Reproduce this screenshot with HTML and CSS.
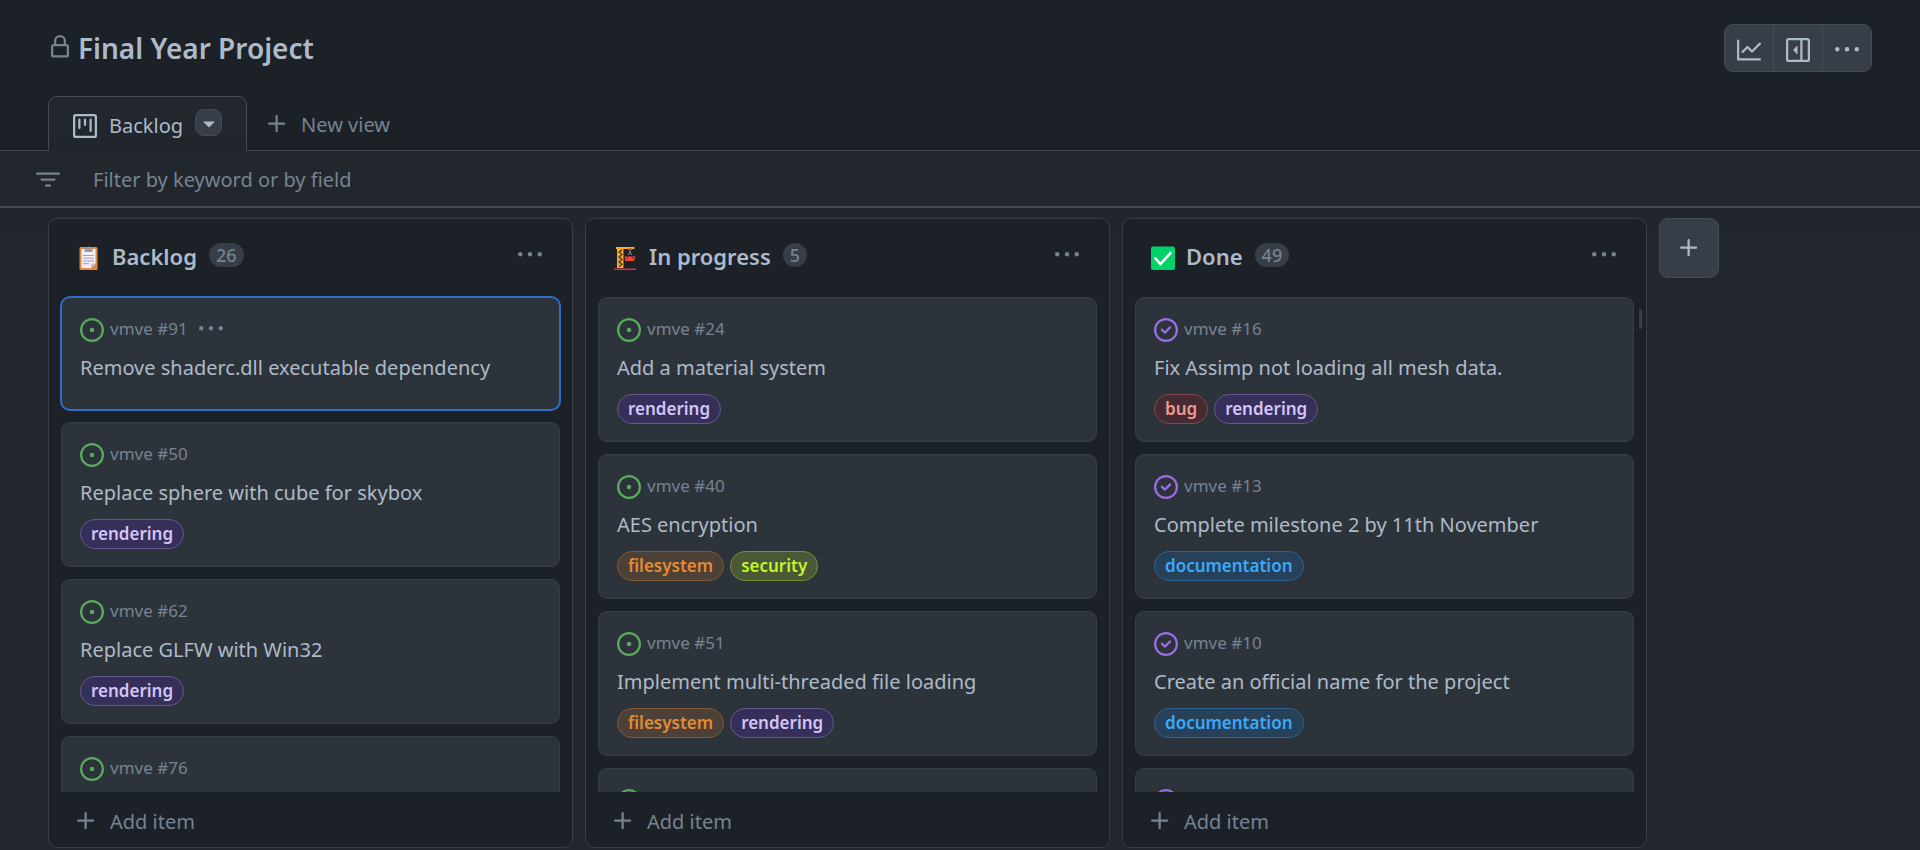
FILE: index.html
```html
<!DOCTYPE html>
<html lang="en">
<head>
<meta charset="utf-8">
<title>Final Year Project</title>
<link rel="stylesheet" href="styles.css">
</head>
<body>
<svg class="sprite" aria-hidden="true">
  <symbol id="i-dots" viewBox="0 0 16 16"><path d="M8 9a1.5 1.5 0 1 0 0-3 1.5 1.5 0 0 0 0 3ZM1.5 9a1.5 1.5 0 1 0 0-3 1.5 1.5 0 0 0 0 3Zm13 0a1.5 1.5 0 1 0 0-3 1.5 1.5 0 0 0 0 3Z"/></symbol>
  <symbol id="i-plus" viewBox="0 0 16 16"><path d="M7.75 2a.75.75 0 0 1 .75.75V7h4.25a.75.75 0 0 1 0 1.5H8.5v4.25a.75.75 0 0 1-1.5 0V8.500H2.750a.75.75 0 0 1 0-1.5H7V2.750A.75.75 0 0 1 7.750 2Z"/></symbol>
  <symbol id="i-open" viewBox="0 0 16 16"><path d="M8 9.500a1.500 1.500 0 1 0 0-3 1.500 1.500 0 0 0 0 3Z"/><path d="M8 0a8 8 0 1 1 0 16A8 8 0 0 1 8 0ZM1.500 8a6.500 6.500 0 1 0 13 0 6.500 6.500 0 0 0-13 0Z"/></symbol>
  <symbol id="i-closed" viewBox="0 0 16 16"><path d="M11.28 6.78a.75.75 0 0 0-1.06-1.06L7.25 8.69 5.78 7.22a.75.75 0 0 0-1.06 1.06l2 2a.75.75 0 0 0 1.06 0l3.5-3.5Z"/><path d="M16 8A8 8 0 1 1 0 8a8 8 0 0 1 16 0Zm-1.5 0a6.5 6.5 0 1 0-13 0 6.5 6.5 0 0 0 13 0Z"/></symbol>
</svg>

<header class="header">
  <h1 class="title">
    <svg class="icon title-lock" viewBox="0 0 16 16"><path d="M4 4a4 4 0 0 1 8 0v2h.25c.966 0 1.75.784 1.75 1.75v5.5A1.75 1.75 0 0 1 12.25 15h-8.5A1.75 1.75 0 0 1 2 13.25v-5.5C2 6.784 2.784 6 3.75 6H4Zm8.25 3.5h-8.5a.25.25 0 0 0-.25.25v5.5c0 .138.112.25.25.25h8.5a.25.25 0 0 0 .25-.25v-5.5a.25.25 0 0 0-.25-.25ZM10.5 6V4a2.5 2.5 0 1 0-5 0v2Z"/></svg>
    Final Year Project
  </h1>
  <div class="actions">
    <button class="action" aria-label="Insights"><svg class="icon" viewBox="0 0 16 16"><path d="M1.5 1.75V13.5h13.75a.75.75 0 0 1 0 1.5H.75a.75.75 0 0 1-.75-.75V1.75a.75.75 0 0 1 1.5 0Zm14.28 2.53-5.25 5.25a.75.75 0 0 1-1.06 0L7 7.06 4.28 9.78a.75.75 0 0 1-1.06-1.06l3.25-3.25a.75.75 0 0 1 1.06 0L10 7.94l4.72-4.72a.75.75 0 0 1 1.06 1.06Z"/></svg></button>
    <button class="action" aria-label="Open details"><svg class="icon" viewBox="0 0 16 16"><path d="M7.2 10.6 5 8.4a.55.55 0 0 1 0-.8l2.2-2.2c.3-.3.5-.1.5.2v4.8c0 .4-.2.5-.5.2Z"/><path d="M1.75 0h12.5C15.216 0 16 .784 16 1.75v12.5A1.75 1.75 0 0 1 14.25 16H1.75A1.75 1.75 0 0 1 0 14.25V1.75C0 .784.784 0 1.75 0ZM1.5 1.75v12.5c0 .138.112.25.25.25H9.5v-13H1.75a.25.25 0 0 0-.25.25ZM11 14.5h3.25a.25.25 0 0 0 .25-.25V1.75a.25.25 0 0 0-.25-.25H11Z"/></svg></button>
    <button class="action" aria-label="More options"><svg class="icon"><use href="#i-dots"/></svg></button>
  </div>
</header>

<nav class="tabs">
  <div class="tab">
    <a class="tab-link" href="#"><svg class="icon" viewBox="0 0 16 16"><path d="M1.75 0h12.5C15.216 0 16 .784 16 1.75v12.5A1.75 1.75 0 0 1 14.25 16H1.75A1.75 1.75 0 0 1 0 14.25V1.75C0 .784.784 0 1.75 0ZM1.5 1.75v12.5c0 .138.112.25.25.25h12.5a.25.25 0 0 0 .25-.25V1.75a.25.25 0 0 0-.25-.25H1.75a.25.25 0 0 0-.25.25ZM11.75 3a.75.75 0 0 1 .75.75v7.5a.75.75 0 0 1-1.5 0v-7.5a.75.75 0 0 1 .75-.75Zm-8.25.75a.75.75 0 0 1 1.5 0v5.5a.75.75 0 0 1-1.5 0ZM8 3a.75.75 0 0 1 .75.75v3.5a.75.75 0 0 1-1.5 0v-3.5A.75.75 0 0 1 8 3Z"/></svg>Backlog</a>
    <button class="tab-menu" aria-label="View options"><svg class="icon" viewBox="0 0 16 16"><path d="m4.427 7.427 3.396 3.396a.25.25 0 0 0 .354 0l3.396-3.396A.25.25 0 0 0 11.396 7H4.604a.25.25 0 0 0-.177.427Z"/></svg></button>
  </div>
  <button class="new-view"><svg class="icon"><use href="#i-plus"/></svg><span class="button-text">New view</span></button>
</nav>

<div class="filter">
  <svg class="icon" viewBox="0 0 16 16"><path d="M.75 3h14.5a.75.75 0 0 1 0 1.5H.75a.75.75 0 0 1 0-1.5ZM3 7.75A.75.75 0 0 1 3.75 7h8.5a.75.75 0 0 1 0 1.5h-8.5A.75.75 0 0 1 3 7.75Zm3 4a.75.75 0 0 1 .75-.75h2.5a.75.75 0 0 1 0 1.5h-2.5a.75.75 0 0 1-.75-.75Z"/></svg>
  <input class="filter-input" type="text" placeholder="Filter by keyword or by field" aria-label="Filter by keyword or by field">
</div>

<main class="board">
  <section class="column">
    <div class="column-head">
      <svg class="emoji" viewBox="0 0 24 24"><rect x="2.5" y="1" width="18" height="23" rx="1.5" fill="#e0893f"/><path d="M4.5 3h14v14.500L14 22H4.500Z" fill="#f3eef8"/><path d="M18.500 17.500 14 22v-4.500Z" fill="#c9c0d4"/><path d="M7.500 2H10a1.500 1.500 0 0 1 3 0h2.500v4h-8Z" fill="#9b9b9b"/><path d="M6 9.500h11M6 12.200h11M6 15h11M6 17.700h6" stroke="#a59fae" stroke-width="1"/></svg>
      <h2 class="column-title">Backlog</h2><span class="count">26</span>
      <button class="more" aria-label="Column options"><svg class="icon"><use href="#i-dots"/></svg></button>
    </div>
    <div class="cards">
      <article class="card selected">
        <div class="meta"><svg class="icon open"><use href="#i-open"/></svg><span class="ref">vmve #91</span><button class="card-more" aria-label="Card options"><svg class="icon"><use href="#i-dots"/></svg></button></div>
        <a class="card-title" href="#">Remove shaderc.dll executable dependency</a>
      </article>
      <article class="card">
        <div class="meta"><svg class="icon open"><use href="#i-open"/></svg><span class="ref">vmve #50</span></div>
        <a class="card-title" href="#">Replace sphere with cube for skybox</a>
        <div class="labels"><span class="label rendering">rendering</span></div>
      </article>
      <article class="card">
        <div class="meta"><svg class="icon open"><use href="#i-open"/></svg><span class="ref">vmve #62</span></div>
        <a class="card-title" href="#">Replace GLFW with Win32</a>
        <div class="labels"><span class="label rendering">rendering</span></div>
      </article>
      <article class="card">
        <div class="meta"><svg class="icon open"><use href="#i-open"/></svg><span class="ref">vmve #76</span></div>
      </article>
    </div>
    <button class="add-item"><svg class="icon"><use href="#i-plus"/></svg><span class="button-text">Add item</span></button>
  </section>

  <section class="column">
    <div class="column-head">
      <svg class="emoji" viewBox="0 0 24 24"><path d="M2 1h18.500v2H2Z" fill="#ffb02e"/><path d="M3 2h6.500v20H3Z" fill="#f9a72b"/><path d="m8 4-3 2 3 2.500L5 11l3 2.500L5 16l3 2.500-3 2" fill="none" stroke="#3b2d20" stroke-width="1.200"/><path d="M16 3v4M16 6l-1.800 3M16 6l1.800 3" stroke="#9b9b9b" stroke-width="0.900"/><path d="M14 2.500h4V4h-4Z" fill="#e8332f"/><path d="M0 22.500h22V24H0Z" fill="#e0302f"/><path d="M10.500 10.500h11L20 15h-8.500Z" fill="#f8432f"/><path d="M12.500 11.500h1.500l-1 2ZM18 11.500h2l-1 2Z" fill="#5c1f1c"/></svg>
      <h2 class="column-title">In progress</h2><span class="count">5</span>
      <button class="more" aria-label="Column options"><svg class="icon"><use href="#i-dots"/></svg></button>
    </div>
    <div class="cards">
      <article class="card">
        <div class="meta"><svg class="icon open"><use href="#i-open"/></svg><span class="ref">vmve #24</span></div>
        <a class="card-title" href="#">Add a material system</a>
        <div class="labels"><span class="label rendering">rendering</span></div>
      </article>
      <article class="card">
        <div class="meta"><svg class="icon open"><use href="#i-open"/></svg><span class="ref">vmve #40</span></div>
        <a class="card-title" href="#">AES encryption</a>
        <div class="labels"><span class="label filesystem">filesystem</span><span class="label security">security</span></div>
      </article>
      <article class="card">
        <div class="meta"><svg class="icon open"><use href="#i-open"/></svg><span class="ref">vmve #51</span></div>
        <a class="card-title" href="#">Implement multi-threaded file loading</a>
        <div class="labels"><span class="label filesystem">filesystem</span><span class="label rendering">rendering</span></div>
      </article>
      <article class="card">
        <div class="meta"><svg class="icon open"><use href="#i-open"/></svg></div>
      </article>
    </div>
    <button class="add-item"><svg class="icon"><use href="#i-plus"/></svg><span class="button-text">Add item</span></button>
  </section>

  <section class="column">
    <div class="column-head">
      <svg class="emoji" viewBox="0 0 24 24"><rect y="0.5" width="24" height="23.5" rx="2" fill="#00d26a"/><path d="m4.500 12.500 5 5.500L19.500 7" fill="none" stroke="#fff" stroke-width="2.600" stroke-linecap="round"/></svg>
      <h2 class="column-title">Done</h2><span class="count">49</span>
      <button class="more" aria-label="Column options"><svg class="icon"><use href="#i-dots"/></svg></button>
    </div>
    <div class="cards">
      <span class="scroll-thumb"></span>
      <article class="card">
        <div class="meta"><svg class="icon closed"><use href="#i-closed"/></svg><span class="ref">vmve #16</span></div>
        <a class="card-title" href="#">Fix Assimp not loading all mesh data.</a>
        <div class="labels"><span class="label bug">bug</span><span class="label rendering">rendering</span></div>
      </article>
      <article class="card">
        <div class="meta"><svg class="icon closed"><use href="#i-closed"/></svg><span class="ref">vmve #13</span></div>
        <a class="card-title" href="#">Complete milestone 2 by 11th November</a>
        <div class="labels"><span class="label documentation">documentation</span></div>
      </article>
      <article class="card">
        <div class="meta"><svg class="icon closed"><use href="#i-closed"/></svg><span class="ref">vmve #10</span></div>
        <a class="card-title" href="#">Create an official name for the project</a>
        <div class="labels"><span class="label documentation">documentation</span></div>
      </article>
      <article class="card">
        <div class="meta"><svg class="icon closed"><use href="#i-closed"/></svg></div>
      </article>
    </div>
    <button class="add-item"><svg class="icon"><use href="#i-plus"/></svg><span class="button-text">Add item</span></button>
  </section>

  <button class="add-column" aria-label="Add a new column"><svg class="icon"><use href="#i-plus"/></svg></button>
</main>
</body>
</html>
```

FILE: styles.css
```css
* { box-sizing: border-box; }

body {
  margin: 0;
  height: 100vh;
  display: flex;
  flex-direction: column;
  overflow: hidden;
  background: #22272e;
  color: #adbac7;
  font: 20px/32px "Noto Sans", "Open Sans", sans-serif;
}

button, input { font: inherit; color: inherit; margin: 0; }
button {
  display: flex;
  align-items: center;
  justify-content: center;
  padding: 0;
  border: 0;
  background: none;
  cursor: pointer;
}
a { color: inherit; text-decoration: none; }

.sprite { position: absolute; width: 0; height: 0; }
.icon { width: 24px; height: 24px; flex: none; fill: currentColor; display: block; }
.button-text { padding-top: 3px; }

/* Header */
.header {
  display: flex;
  justify-content: space-between;
  align-items: center;
  padding: 24px 48px;
  background: #1c2128;
}
.title {
  display: flex;
  align-items: center;
  gap: 6px;
  margin: 0;
  font-size: 28px;
  line-height: 48px;
  font-weight: 600;
}
.title-lock { margin-bottom: 3px; color: #768390; }
.actions {
  display: flex;
  border: 1px solid #444c56;
  border-radius: 9px;
  background: #373e47;
}
.action { width: 49px; height: 46px; padding-top: 3px; }
.action:first-child { width: 48px; }
.action + .action { border-left: 1px solid #444c56; }

/* View tabs */
.tabs {
  display: flex;
  padding: 0 48px;
  background: #1c2128;
  box-shadow: inset 0 -1px #444c56;
}
.tab {
  display: flex;
  align-items: center;
  gap: 12px;
  height: 55px;
  padding: 0 24px;
  border: 1px solid #444c56;
  border-bottom: 0;
  border-radius: 9px 9px 0 0;
  background: #22272e;
}
.tab-link { display: flex; align-items: center; gap: 12px; padding-top: 4px; }
.tab-menu {
  width: 27px;
  height: 27px;
  margin-bottom: 3px;
  border: 1px solid #444c56;
  border-radius: 9px;
  background: #373e47;
}
.new-view { gap: 12px; padding: 0 18px; color: #768390; }

/* Filter bar */
.filter {
  display: flex;
  align-items: center;
  gap: 33px;
  padding: 3px 36px 0;
  height: 57px;
  flex: none;
  border-bottom: 2px solid #444c56;
  box-shadow: 0 4px 12px rgba(28, 33, 40, 0.5);
  color: #768390;
}
.filter-input {
  flex: 1;
  padding: 0;
  border: 0;
  outline: 0;
  background: none;
}
.filter-input::placeholder { color: #768390; opacity: 1; }

/* Board */
.board {
  flex: 1;
  min-height: 0;
  display: flex;
  align-items: flex-start;
  gap: 12px;
  padding: 10px 48px 2px;
}
.column {
  flex: 0 0 525px;
  align-self: stretch;
  min-height: 0;
  display: flex;
  flex-direction: column;
  border: 1px solid #373e47;
  border-radius: 9px;
  background: #1c2128;
}
.column-head {
  display: flex;
  align-items: center;
  padding: 20px 30px 16px 28px;
}
.emoji { width: 24px; height: 24px; flex: none; margin-top: 5px; }
.column-title {
  margin: 0 12px 0 11px;
  padding-top: 3px;
  font-size: 22px;
  line-height: 29px;
  font-weight: 600;
}
.count {
  min-width: 24px;
  padding: 0 7px;
  border-radius: 12px;
  background: #373e47;
  color: #768390;
  font-size: 18px;
  line-height: 24px;
  font-weight: 500;
  text-align: center;
}
.more { height: 32px; margin-left: auto; color: #768390; }

.cards {
  position: relative;
  flex: 1;
  min-height: 0;
  overflow: hidden;
  display: flex;
  flex-direction: column;
  gap: 12px;
  padding: 10px 12px 0;
}
.card {
  flex: none;
  min-height: 113px;
  padding: 18px 18px 17px;
  border: 1px solid #373e47;
  border-radius: 9px;
  background: #2d333b;
}
.card.selected { border-color: #316dca; box-shadow: 0 0 0 1px #316dca; }
.meta {
  display: flex;
  align-items: center;
  gap: 6px;
  height: 28px;
  color: #768390;
  font-size: 17px;
  line-height: 26px;
}
.ref { padding-bottom: 2px; }
.meta .open { color: #57ab5a; }
.meta .closed { color: #986ee2; }
.card-more { margin-left: 5px; padding-bottom: 3px; }
.card-title { display: block; margin: 8px 0; }
.labels { display: flex; gap: 6px; padding-top: 2px; }
.label {
  padding: 0 10px;
  border: 1px solid;
  border-radius: 15px;
  font-size: 17px;
  line-height: 28px;
  font-weight: 600;
}
.rendering { color: #d4c5f9; background: #352f5a; border-color: #65598c; }
.filesystem { color: #e38b31; background: #4d4137; border-color: #805833; }
.security { color: #c1f52c; background: #4a5837; border-color: #778e35; }
.bug { color: #f39791; background: #452a31; border-color: #804a4e; }
.documentation { color: #3da9fb; background: #264159; border-color: #2b6392; }
.scroll-thumb {
  position: absolute;
  top: 22px;
  right: 4px;
  width: 3px;
  height: 20px;
  border-radius: 2px;
  background: #373e47;
}
.add-item {
  justify-content: flex-start;
  gap: 12px;
  padding: 11px 25px 9px;
  color: #768390;
}
.add-column {
  flex: none;
  width: 60px;
  height: 60px;
  border: 1px solid #444c56;
  border-radius: 9px;
  background: #373e47;
}
```
